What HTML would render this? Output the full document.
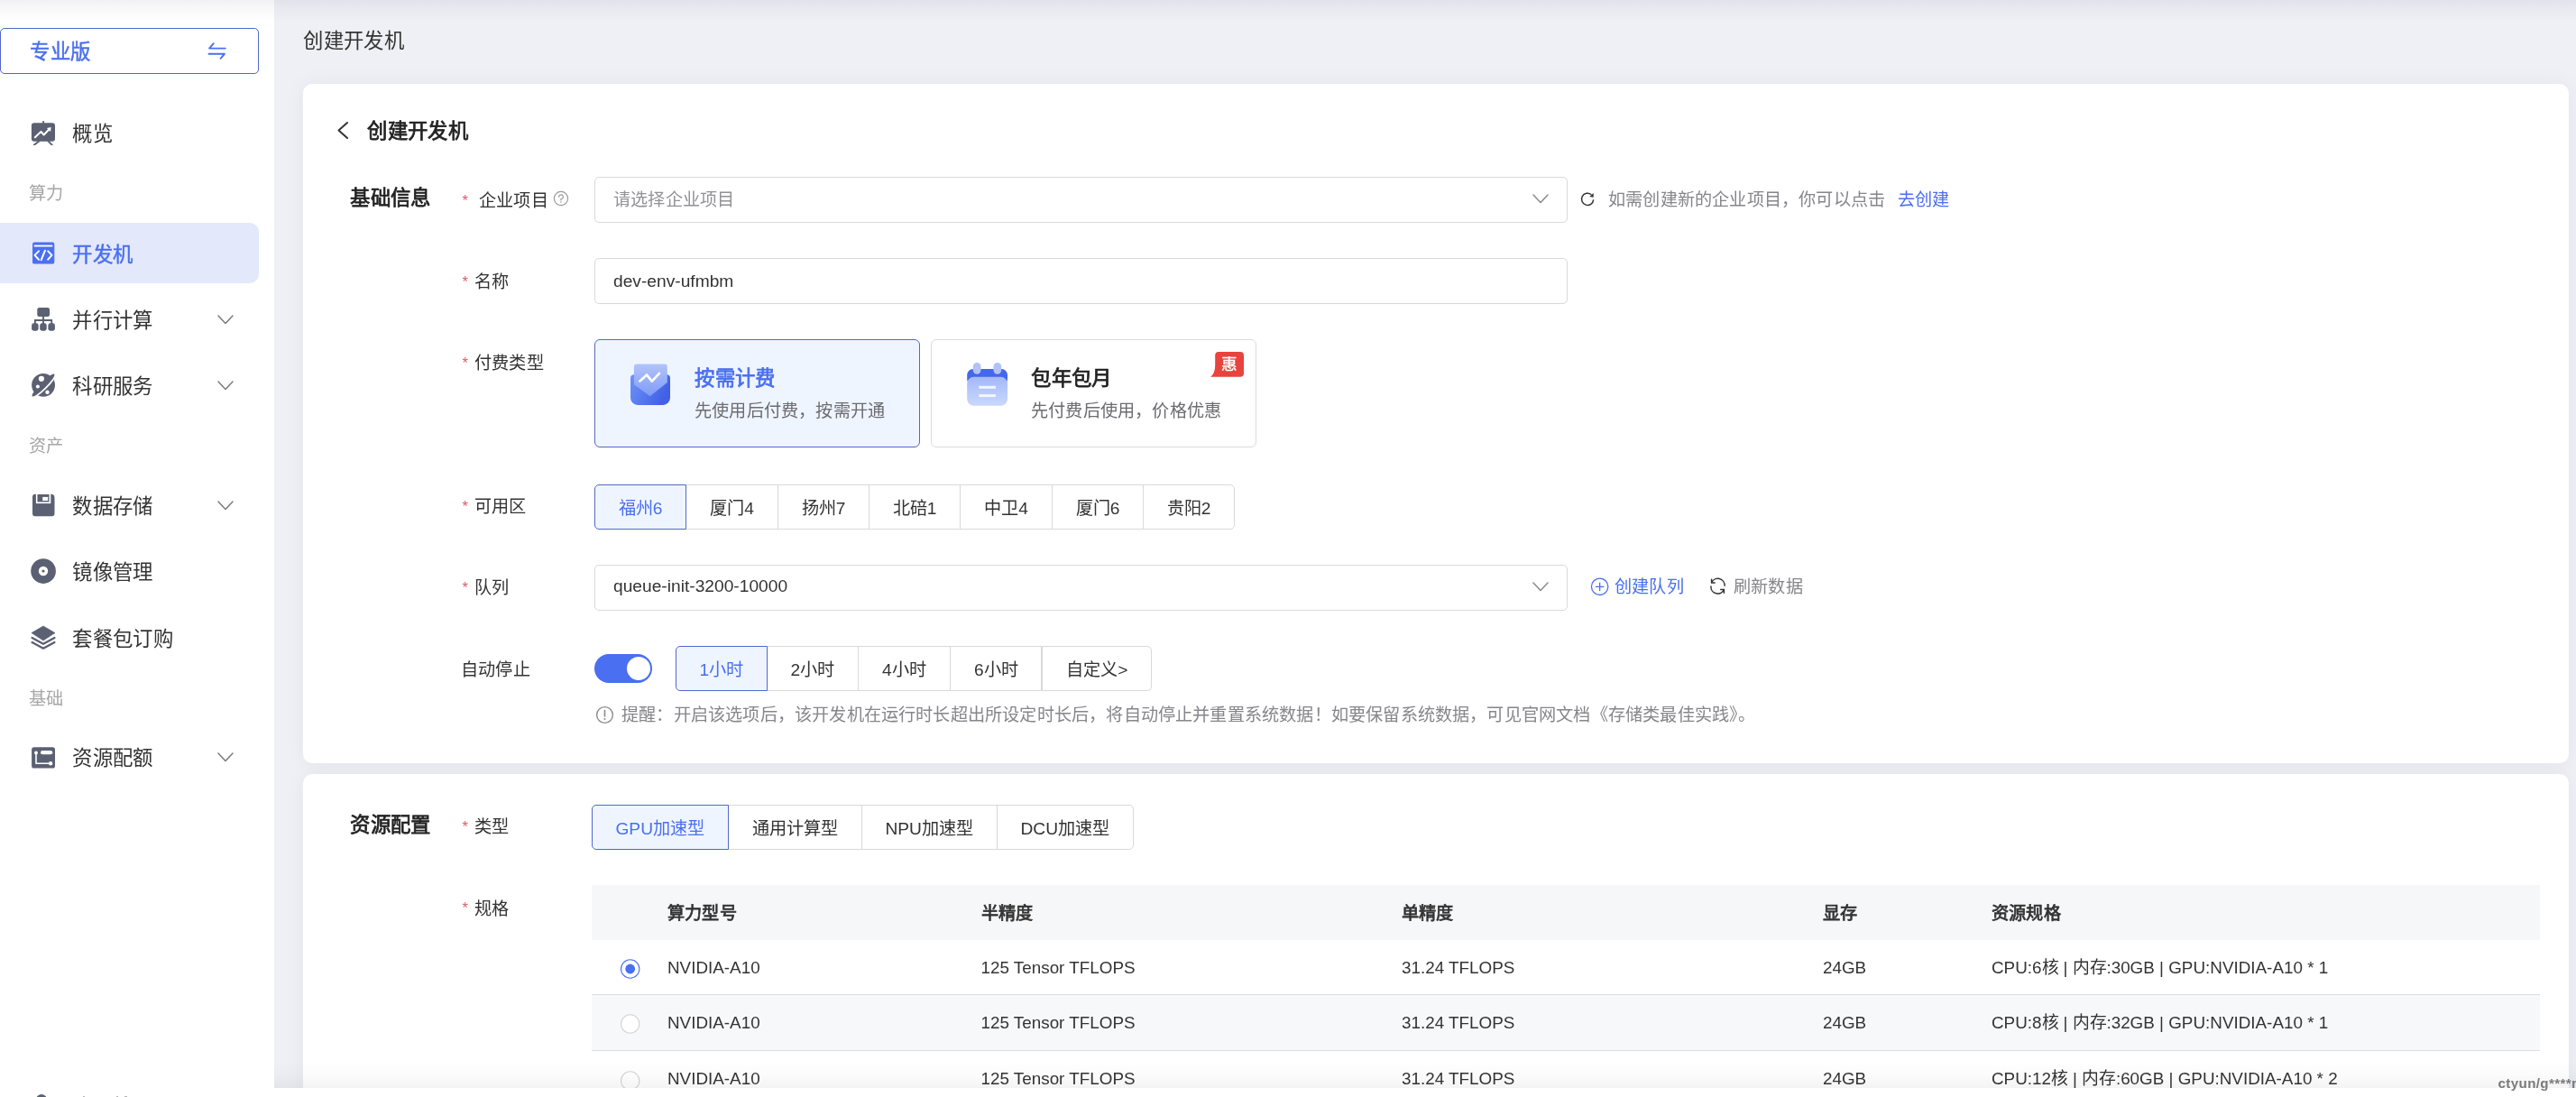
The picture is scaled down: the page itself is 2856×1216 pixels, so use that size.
<!DOCTYPE html>
<html lang="zh-CN">
<head>
<meta charset="utf-8">
<title>创建开发机</title>
<style>
html,body{margin:0;padding:0;}
body{width:2856px;height:1216px;overflow:hidden;position:relative;background:#fff;will-change:transform;
  font-family:"Liberation Sans",sans-serif;font-size:19.2px;color:#333;}
.b{position:absolute;box-sizing:border-box;display:block;}
.t{position:absolute;white-space:nowrap;box-sizing:border-box;}
.inp{position:absolute;box-sizing:border-box;border:1px solid #d9d9d9;border-radius:5px;background:#fff;}
.seg{position:absolute;box-sizing:border-box;border:1px solid #d9d9d9;background:#fff;}
.seg.on{border-color:#5268c8;background:#eff5ff;z-index:2;}
.star{color:#e5484d;}
i{display:inline-block;width:1em;text-align:center;font-style:normal;white-space:nowrap;overflow:visible;vertical-align:baseline;}
i.h{width:0.5em;text-align:left;}

</style>
</head>
<body>
<div class="b" style="left:304px;top:0px;width:2552px;height:1206px;background:#eff0f5;"></div>
<div class="b" style="left:0px;top:0px;width:304px;height:1216px;background:#fff;"></div>
<div class="b" style="left:336px;top:93px;width:2512px;height:753px;background:#fff;border-radius:10px;box-shadow:0 0 22px rgba(30,30,60,0.05);"></div>
<div class="b" style="left:336px;top:858px;width:2512px;height:400px;background:#fff;border-radius:10px 10px 0 0;box-shadow:0 0 22px rgba(30,30,60,0.05);"></div>
<nav>
<div class="b" style="left:0px;top:31px;width:287px;height:51px;border:1px solid #5268c8;border-radius:5px;background:#fff;"></div>
<div class="t" style="left:33px;top:43.00px;font-size:22.4px;line-height:30px;height:30px;color:#4a6ff0;-webkit-text-stroke:0.45px #4a6ff0;"><i>专</i><i>业</i><i>版</i></div>
<svg class="b" style="left:226px;top:42px;" width="30" height="30" viewBox="0 0 30 30"><g fill="none" stroke="#4a6ff0" stroke-width="1.9" stroke-linecap="round" stroke-linejoin="round"><path d="M10.8 6.2L6.1 11.6H23.8"/><path d="M5.5 17.8H22.9L18.5 22.8"/></g></svg>
<svg class="b" style="left:34px;top:133px" width="28" height="28" viewBox="0 0 28 28"><rect x="0.9" y="3.2" width="26.1" height="20.6" rx="3" fill="#5b6072"/><rect x="13.1" y="1.1" width="2" height="3" rx="0.8" fill="#5b6072"/><path d="M9.3 23.6L4 27.6M19.5 23.6L23.7 27.6" fill="none" stroke="#5b6072" stroke-width="1.9" stroke-linecap="round"/><path d="M4.8 19.3L11.5 12.9L14.6 16.5L20.3 10.5" fill="none" stroke="#fff" stroke-width="2" stroke-linecap="round" stroke-linejoin="round"/><path d="M22.6 8L22.1 13L17.9 9Z" fill="#fff"/></svg>
<div class="t" style="left:80px;top:134.00px;font-size:22.4px;line-height:30px;height:30px;color:#333;"><i>概</i><i>览</i></div>
<div class="t" style="left:32px;top:200.00px;font-size:19.2px;line-height:30px;height:30px;color:#a6a6a6;"><i>算</i><i>力</i></div>
<div class="b" style="left:0px;top:247.0px;width:287px;height:67px;background:#e3e8fb;border-radius:0 10px 10px 0;"></div>
<svg class="b" style="left:34px;top:266.5px" width="28" height="28" viewBox="0 0 28 28"><rect x="2" y="1.5" width="24.3" height="24.1" rx="2.2" fill="#4a6ff0"/><rect x="3.7" y="4.6" width="20.6" height="1.9" fill="#fff"/><path d="M9 11.4L4.5 15.9L9 20.8M19.2 11.4L23.5 15.9L19.2 20.7M15.9 10.8L11.7 21.2" fill="none" stroke="#fff" stroke-width="2" stroke-linecap="round" stroke-linejoin="round"/></svg>
<div class="t" style="left:80px;top:267.50px;font-size:22.4px;line-height:30px;height:30px;color:#4a6ff0;-webkit-text-stroke:0.45px #4a6ff0;"><i>开</i><i>发</i><i>机</i></div>
<svg class="b" style="left:34px;top:340px" width="28" height="28" viewBox="0 0 28 28"><rect x="7.3" y="1.1" width="13.7" height="9.9" rx="2.2" fill="#5b6072"/><path d="M14 10.5V19M4.9 19V15H23.2V19" fill="none" stroke="#5b6072" stroke-width="1.9"/><rect x="1.1" y="18.3" width="7.5" height="8.4" rx="2.4" fill="#5b6072"/><rect x="10.2" y="18.3" width="7.5" height="8.4" rx="2.4" fill="#5b6072"/><rect x="19.4" y="18.3" width="7.5" height="8.4" rx="2.4" fill="#5b6072"/></svg>
<div class="t" style="left:80px;top:341.00px;font-size:22.4px;line-height:30px;height:30px;color:#333;"><i>并</i><i>行</i><i>计</i><i>算</i></div>
<svg class="b" style="left:240.0px;top:347.7px;" width="20" height="12.6" viewBox="0 0 20 12.6"><path d="M2 2L10.0 10.6L18 2" fill="none" stroke="#777" stroke-width="1.4" stroke-linecap="round" stroke-linejoin="round"/></svg>
<svg class="b" style="left:34px;top:413px" width="28" height="28" viewBox="0 0 28 28"><defs><clipPath id="scp"><circle cx="14.05" cy="13.85" r="12.95"/></clipPath></defs><circle cx="14.05" cy="13.85" r="12.95" fill="#5b6072"/><g clip-path="url(#scp)"><ellipse cx="15.15" cy="15.15" rx="17.8" ry="3.4" transform="rotate(-45 15.15 15.15)" fill="#fff"/></g><ellipse cx="14" cy="14" rx="17.3" ry="3.3" transform="rotate(-45 14 14)" fill="#5b6072"/><circle cx="11.9" cy="6.8" r="3.1" fill="#fff"/><circle cx="7.9" cy="15.5" r="2" fill="#fff"/><circle cx="18.5" cy="21.7" r="2.2" fill="#fff"/></svg>
<div class="t" style="left:80px;top:414.00px;font-size:22.4px;line-height:30px;height:30px;color:#333;"><i>科</i><i>研</i><i>服</i><i>务</i></div>
<svg class="b" style="left:240.0px;top:420.7px;" width="20" height="12.6" viewBox="0 0 20 12.6"><path d="M2 2L10.0 10.6L18 2" fill="none" stroke="#777" stroke-width="1.4" stroke-linecap="round" stroke-linejoin="round"/></svg>
<div class="t" style="left:32px;top:479.50px;font-size:19.2px;line-height:30px;height:30px;color:#a6a6a6;"><i>资</i><i>产</i></div>
<svg class="b" style="left:34px;top:546px" width="28" height="28" viewBox="0 0 28 28"><path d="M5 1.8H22.5Q26.5 1.8 26.5 6V23.3A3 3 0 0 1 23.5 26.3H5A3 3 0 0 1 2 23.3V4.8A3 3 0 0 1 5 1.8Z" fill="#5b6072"/><path d="M5.9 1H22.3V12.1H5.9Z" fill="#fff"/><rect x="7.5" y="2" width="13" height="8.4" fill="#5b6072"/><rect x="13.2" y="4.9" width="6" height="4.1" fill="#fff"/></svg>
<div class="t" style="left:80px;top:547.00px;font-size:22.4px;line-height:30px;height:30px;color:#333;"><i>数</i><i>据</i><i>存</i><i>储</i></div>
<svg class="b" style="left:240.0px;top:553.7px;" width="20" height="12.6" viewBox="0 0 20 12.6"><path d="M2 2L10.0 10.6L18 2" fill="none" stroke="#777" stroke-width="1.4" stroke-linecap="round" stroke-linejoin="round"/></svg>
<svg class="b" style="left:34px;top:619px" width="28" height="28" viewBox="0 0 28 28"><circle cx="14.05" cy="14.05" r="13.85" fill="#5b6072"/><circle cx="14" cy="14" r="5.2" fill="#fff"/><circle cx="14" cy="14" r="1.6" fill="#5b6072"/></svg>
<div class="t" style="left:80px;top:620.00px;font-size:22.4px;line-height:30px;height:30px;color:#333;"><i>镜</i><i>像</i><i>管</i><i>理</i></div>
<svg class="b" style="left:34px;top:693px" width="28" height="28" viewBox="0 0 28 28"><path d="M14 0.9L27 8.6L14 17L0.9 8.6Z" fill="#5b6072" stroke="#5b6072" stroke-width="0.6" stroke-linejoin="round"/><path d="M1.6 14L14 20.7L26.4 14M1.6 19L14 25.7L26.4 19" fill="none" stroke="#5b6072" stroke-width="2.3" stroke-linejoin="round" stroke-linecap="round"/></svg>
<div class="t" style="left:80px;top:694.00px;font-size:22.4px;line-height:30px;height:30px;color:#333;"><i>套</i><i>餐</i><i>包</i><i>订</i><i>购</i></div>
<div class="t" style="left:32px;top:760.00px;font-size:19.2px;line-height:30px;height:30px;color:#a6a6a6;"><i>基</i><i>础</i></div>
<svg class="b" style="left:34px;top:825px" width="28" height="28" viewBox="0 0 28 28"><rect x="1.1" y="3.3" width="25.9" height="23.2" rx="2.6" fill="#5b6072"/><rect x="11" y="7.1" width="13.3" height="4.2" rx="2.1" fill="#fff"/><path d="M6 9.5V21.2H22" fill="none" stroke="#fff" stroke-width="1.6" stroke-linejoin="round"/><circle cx="6" cy="9.5" r="2" fill="#fff"/><circle cx="22.1" cy="21.2" r="2.2" fill="#fff"/></svg>
<div class="t" style="left:80px;top:826.00px;font-size:22.4px;line-height:30px;height:30px;color:#333;"><i>资</i><i>源</i><i>配</i><i>额</i></div>
<svg class="b" style="left:240.0px;top:832.7px;" width="20" height="12.6" viewBox="0 0 20 12.6"><path d="M2 2L10.0 10.6L18 2" fill="none" stroke="#777" stroke-width="1.4" stroke-linecap="round" stroke-linejoin="round"/></svg>
<div class="b" style="left:40px;top:1213px;width:12px;height:12px;background:#5b6072;border-radius:6px;"></div>
<div class="b" style="left:91.5px;top:1215px;width:2.5px;height:1px;background:#b5b5b8;"></div>
<div class="b" style="left:128.5px;top:1215px;width:2px;height:1px;background:#b5b5b8;"></div>
<div class="b" style="left:138px;top:1215px;width:3px;height:1px;background:#b5b5b8;"></div>
</nav>
<main>
<section>
<div class="t" style="left:336px;top:31.00px;font-size:22.4px;line-height:30px;height:30px;color:#333;"><i>创</i><i>建</i><i>开</i><i>发</i><i>机</i></div>
<svg class="b" style="left:370px;top:132px;" width="20" height="26" viewBox="0 0 20 26"><path d="M15 4L5.5 12.5L15 21" fill="none" stroke="#333" stroke-width="2" stroke-linecap="round" stroke-linejoin="round"/></svg>
<div class="t" style="left:407px;top:131.00px;font-size:22.4px;line-height:30px;height:30px;color:#222;-webkit-text-stroke:0.75px;"><i>创</i><i>建</i><i>开</i><i>发</i><i>机</i></div>
<div class="t" style="left:388px;top:205.00px;font-size:22.4px;line-height:30px;height:30px;color:#222;-webkit-text-stroke:0.75px;"><i>基</i><i>础</i><i>信</i><i>息</i></div>
<div class="t" style="left:512.4px;top:206.90px;font-size:16.5px;line-height:30px;height:30px;color:#dd5a66;">*</div>
<div class="t" style="left:531px;top:208.00px;font-size:19.2px;line-height:30px;height:30px;color:#333;"><i>企</i><i>业</i><i>项</i><i>目</i></div>
<svg class="b" style="left:613.3px;top:211px;" width="18" height="18" viewBox="0 0 18 18"><circle cx="9" cy="9" r="7.6" fill="none" stroke="#999" stroke-width="1.2"/><path d="M6.6 7.3A2.4 2.4 0 1 1 9 9.6V10.9" fill="none" stroke="#999" stroke-width="1.2" stroke-linecap="round"/><circle cx="9" cy="13" r="0.8" fill="#999"/></svg>
<div class="inp" style="left:659px;top:196px;width:1079px;height:51px;"></div>
<div class="t" style="left:680px;top:207.00px;font-size:19.2px;line-height:30px;height:30px;color:#929297;"><i>请</i><i>选</i><i>择</i><i>企</i><i>业</i><i>项</i><i>目</i></div>
<svg class="b" style="left:1697.5px;top:214.25px;" width="20" height="12.5" viewBox="0 0 20 12.5"><path d="M2 2L10.0 10.5L18 2" fill="none" stroke="#8a8a8a" stroke-width="1.5" stroke-linecap="round" stroke-linejoin="round"/></svg>
<svg class="b" style="left:1750px;top:210px;" width="22" height="22" viewBox="0 0 22 22"><path d="M16.67 11.37A6.6 6.6 0 1 1 14.34 5.74" fill="none" stroke="#333" stroke-width="1.5"/><path d="M16.7 4V8.7L12.3 7.9Z" fill="#333"/></svg>
<div class="t" style="left:1783px;top:207.00px;font-size:19.2px;line-height:30px;height:30px;color:#86868b;"><i>如</i><i>需</i><i>创</i><i>建</i><i>新</i><i>的</i><i>企</i><i>业</i><i>项</i><i>目</i><i>，</i><i>你</i><i>可</i><i>以</i><i>点</i><i>击</i></div>
<div class="t" style="left:2104px;top:207.00px;font-size:19.2px;line-height:30px;height:30px;color:#4a6ff0;"><i>去</i><i>创</i><i>建</i></div>
<div class="t" style="left:512.4px;top:296.90px;font-size:16.5px;line-height:30px;height:30px;color:#dd5a66;">*</div>
<div class="t" style="left:526px;top:298.00px;font-size:19.2px;line-height:30px;height:30px;color:#333;"><i>名</i><i>称</i></div>
<div class="inp" style="left:659px;top:286px;width:1079px;height:51px;"></div>
<div class="t" style="left:680px;top:296.50px;font-size:19.2px;line-height:30px;height:30px;color:#333;">dev-env-ufmbm</div>
<div class="t" style="left:512.4px;top:386.90px;font-size:16.5px;line-height:30px;height:30px;color:#dd5a66;">*</div>
<div class="t" style="left:526px;top:388.00px;font-size:19.2px;line-height:30px;height:30px;color:#333;"><i>付</i><i>费</i><i>类</i><i>型</i></div>
<div class="b" style="left:659px;top:376px;width:361px;height:120px;border:1px solid #5268c8;border-radius:6px;background:#eff5ff;"></div>
<div class="b" style="left:1032px;top:376px;width:361px;height:120px;border:1px solid #dcdcdc;border-radius:6px;background:#fff;"></div>
<div class="t" style="left:770px;top:405.00px;font-size:22.4px;line-height:30px;height:30px;color:#4a6ff0;-webkit-text-stroke:0.75px;"><i>按</i><i>需</i><i>计</i><i>费</i></div>
<div class="t" style="left:770px;top:441.00px;font-size:19.2px;line-height:30px;height:30px;color:#6c6c71;"><i>先</i><i>使</i><i>用</i><i>后</i><i>付</i><i>费</i><i>，</i><i>按</i><i>需</i><i>开</i><i>通</i></div>
<div class="t" style="left:1143px;top:405.00px;font-size:22.4px;line-height:30px;height:30px;color:#222;-webkit-text-stroke:0.75px;"><i>包</i><i>年</i><i>包</i><i>月</i></div>
<div class="t" style="left:1143px;top:441.00px;font-size:19.2px;line-height:30px;height:30px;color:#6c6c71;"><i>先</i><i>付</i><i>费</i><i>后</i><i>使</i><i>用</i><i>，</i><i>价</i><i>格</i><i>优</i><i>惠</i></div>
<svg class="b" style="left:695px;top:400px;z-index:4;" width="52" height="52" viewBox="0 0 52 52"><defs><linearGradient id="pb" x1="0" y1="0" x2="1" y2="0.35"><stop offset="0" stop-color="#6d93fa"/><stop offset="1" stop-color="#4160e6"/></linearGradient><linearGradient id="pp" x1="0" y1="0" x2="0" y2="1"><stop offset="0" stop-color="#b3c4fa"/><stop offset="1" stop-color="#7d9af7"/></linearGradient></defs><path d="M8 15.2H44A4 4 0 0 1 48 19.2V40.9A8 8 0 0 1 40 48.9H12A8 8 0 0 1 4 40.9V19.2A4 4 0 0 1 8 15.2Z" fill="url(#pb)"/><path d="M11 3.5H41.8A3 3 0 0 1 44.8 6.5V24L25.6 39.3L7.9 26.2V6.5A3 3 0 0 1 11 3.5Z" fill="url(#pp)"/><path d="M14.4 22.4L22.1 15.5L27.8 22.6L36 13.9" fill="none" stroke="#fff" stroke-width="2.7" stroke-linecap="round" stroke-linejoin="round"/></svg>
<svg class="b" style="left:1068px;top:398px;z-index:4;" width="54" height="54" viewBox="0 0 54 54"><defs><linearGradient id="cb" x1="0" y1="0" x2="0" y2="1"><stop offset="0" stop-color="#a5b8f8"/><stop offset="1" stop-color="#c9d8fd"/></linearGradient></defs><rect x="4.2" y="11" width="44.8" height="18" rx="6.5" fill="#4568ea"/><rect x="4.2" y="19.7" width="44.8" height="32" rx="7.5" fill="url(#cb)"/><rect x="10.8" y="4.1" width="8.7" height="12.6" rx="4.35" fill="#b1c2f8"/><rect x="33.5" y="4.1" width="8.7" height="12.6" rx="4.35" fill="#b1c2f8"/><rect x="17.3" y="29.8" width="18.6" height="3" fill="#f3f6ff"/><rect x="17.3" y="39.1" width="18.6" height="3" fill="#f3f6ff"/></svg>
<svg class="b" style="left:1338px;top:386px;z-index:4;" width="46" height="36" viewBox="0 0 46 36"><path d="M13 4.1H37Q41 4.1 41 8.1V28Q41 31.7 37 31.7H4Q9.2 28 9.2 19V8.1Q9.2 4.1 13 4.1Z" fill="#e8433d"/></svg>
<div class="t" style="left:1354.3px;top:392.40px;font-size:17.6px;line-height:24px;height:24px;color:#fff;z-index:5;-webkit-text-stroke:0.35px #fff;"><i>惠</i></div>
<div class="t" style="left:512.4px;top:545.90px;font-size:16.5px;line-height:30px;height:30px;color:#dd5a66;">*</div>
<div class="t" style="left:526px;top:547.00px;font-size:19.2px;line-height:30px;height:30px;color:#333;"><i>可</i><i>用</i><i>区</i></div>
<div class="seg on" style="left:659px;top:537px;width:102px;height:50px;border-radius:5px 0 0 5px;"></div>
<div class="t" style="left:659px;top:549.00px;font-size:19.2px;line-height:30px;height:30px;color:#4a6ff0;width:102px;text-align:center;z-index:3;"><i>福</i><i>州</i>6</div>
<div class="seg" style="left:760px;top:537px;width:103px;height:50px;"></div>
<div class="t" style="left:760px;top:549.00px;font-size:19.2px;line-height:30px;height:30px;color:#333;width:103px;text-align:center;z-index:3;"><i>厦</i><i>门</i>4</div>
<div class="seg" style="left:862px;top:537px;width:102px;height:50px;"></div>
<div class="t" style="left:862px;top:549.00px;font-size:19.2px;line-height:30px;height:30px;color:#333;width:102px;text-align:center;z-index:3;"><i>扬</i><i>州</i>7</div>
<div class="seg" style="left:963px;top:537px;width:102px;height:50px;"></div>
<div class="t" style="left:963px;top:549.00px;font-size:19.2px;line-height:30px;height:30px;color:#333;width:102px;text-align:center;z-index:3;"><i>北</i><i>碚</i>1</div>
<div class="seg" style="left:1064px;top:537px;width:103px;height:50px;"></div>
<div class="t" style="left:1064px;top:549.00px;font-size:19.2px;line-height:30px;height:30px;color:#333;width:103px;text-align:center;z-index:3;"><i>中</i><i>卫</i>4</div>
<div class="seg" style="left:1166px;top:537px;width:102px;height:50px;"></div>
<div class="t" style="left:1166px;top:549.00px;font-size:19.2px;line-height:30px;height:30px;color:#333;width:102px;text-align:center;z-index:3;"><i>厦</i><i>门</i>6</div>
<div class="seg" style="left:1267px;top:537px;width:102px;height:50px;border-radius:0 5px 5px 0;"></div>
<div class="t" style="left:1267px;top:549.00px;font-size:19.2px;line-height:30px;height:30px;color:#333;width:102px;text-align:center;z-index:3;"><i>贵</i><i>阳</i>2</div>
<div class="t" style="left:512.4px;top:635.90px;font-size:16.5px;line-height:30px;height:30px;color:#dd5a66;">*</div>
<div class="t" style="left:526px;top:637.00px;font-size:19.2px;line-height:30px;height:30px;color:#333;"><i>队</i><i>列</i></div>
<div class="inp" style="left:659px;top:626px;width:1079px;height:51px;"></div>
<div class="t" style="left:680px;top:635.20px;font-size:19.2px;line-height:30px;height:30px;color:#333;">queue-init-3200-10000</div>
<svg class="b" style="left:1697.5px;top:643.75px;" width="20" height="12.5" viewBox="0 0 20 12.5"><path d="M2 2L10.0 10.5L18 2" fill="none" stroke="#8a8a8a" stroke-width="1.5" stroke-linecap="round" stroke-linejoin="round"/></svg>
<svg class="b" style="left:1762px;top:639px;" width="24" height="24" viewBox="0 0 24 24"><circle cx="11.65" cy="11.3" r="9.2" fill="none" stroke="#4a6ff0" stroke-width="1.3"/><path d="M11.65 7.2V15.6M7.3 11.3H16" stroke="#4a6ff0" stroke-width="1.3" stroke-linecap="round"/></svg>
<div class="t" style="left:1790px;top:636.10px;font-size:19.2px;line-height:30px;height:30px;color:#4a6ff0;"><i>创</i><i>建</i><i>队</i><i>列</i></div>
<svg class="b" style="left:1894px;top:639px;" width="22" height="22" viewBox="0 0 22 22"><g fill="none" stroke="#333" stroke-width="1.5" stroke-linecap="round" stroke-linejoin="round"><path d="M3.6 6.8A7.6 7.6 0 0 1 18.1 10.3"/><path d="M3.6 3.3V6.9H7.2"/><path d="M17.4 14.6A7.6 7.6 0 0 1 2.9 11.1"/><path d="M13.7 14.5H17.4V18.2"/></g></svg>
<div class="t" style="left:1922px;top:636.10px;font-size:19.2px;line-height:30px;height:30px;color:#86868b;"><i>刷</i><i>新</i><i>数</i><i>据</i></div>
<div class="t" style="left:511px;top:728.00px;font-size:19.2px;line-height:30px;height:30px;color:#333;"><i>自</i><i>动</i><i>停</i><i>止</i></div>
<div class="b" style="left:659px;top:725px;width:64px;height:32px;background:#4a6ff0;border-radius:16px;"></div>
<div class="b" style="left:695px;top:728px;width:26px;height:26px;background:#fff;border-radius:13px;"></div>
<div class="seg on" style="left:749px;top:716px;width:102px;height:50px;border-radius:5px 0 0 5px;"></div>
<div class="t" style="left:749px;top:728.00px;font-size:19.2px;line-height:30px;height:30px;color:#4a6ff0;width:102px;text-align:center;z-index:3;">1<i>小</i><i>时</i></div>
<div class="seg" style="left:850px;top:716px;width:102px;height:50px;"></div>
<div class="t" style="left:850px;top:728.00px;font-size:19.2px;line-height:30px;height:30px;color:#333;width:102px;text-align:center;z-index:3;">2<i>小</i><i>时</i></div>
<div class="seg" style="left:951px;top:716px;width:103px;height:50px;"></div>
<div class="t" style="left:951px;top:728.00px;font-size:19.2px;line-height:30px;height:30px;color:#333;width:103px;text-align:center;z-index:3;">4<i>小</i><i>时</i></div>
<div class="seg" style="left:1053px;top:716px;width:103px;height:50px;"></div>
<div class="t" style="left:1053px;top:728.00px;font-size:19.2px;line-height:30px;height:30px;color:#333;width:103px;text-align:center;z-index:3;">6<i>小</i><i>时</i></div>
<div class="seg" style="left:1155px;top:716px;width:122px;height:50px;border-radius:0 5px 5px 0;"></div>
<div class="t" style="left:1155px;top:728.00px;font-size:19.2px;line-height:30px;height:30px;color:#333;width:122px;text-align:center;z-index:3;"><i>自</i><i>定</i><i>义</i>&gt;</div>
<div class="b" style="left:1154px;top:717px;width:1px;height:48px;background:#d9d9d9;z-index:1;"></div>
<svg class="b" style="left:660px;top:782px;" width="22" height="22" viewBox="0 0 22 22"><circle cx="10.5" cy="10.5" r="8.9" fill="none" stroke="#8a8a8a" stroke-width="1.4"/><path d="M10.5 5.6V12" stroke="#8a8a8a" stroke-width="1.6" stroke-linecap="round"/><circle cx="10.5" cy="14.9" r="1" fill="#8a8a8a"/></svg>
<div class="t" style="left:689px;top:778.40px;font-size:19.2px;line-height:30px;height:30px;color:#86868b;"><i>提</i><i>醒</i><i>：</i><i>开</i><i>启</i><i>该</i><i>选</i><i>项</i><i>后</i><i>，</i><i>该</i><i>开</i><i>发</i><i>机</i><i>在</i><i>运</i><i>行</i><i>时</i><i>长</i><i>超</i><i>出</i><i>所</i><i>设</i><i>定</i><i>时</i><i>长</i><i>后</i><i>，</i><i>将</i><i>自</i><i>动</i><i>停</i><i>止</i><i>并</i><i>重</i><i>置</i><i>系</i><i>统</i><i>数</i><i>据</i><i>！</i><i>如</i><i>要</i><i>保</i><i>留</i><i>系</i><i>统</i><i>数</i><i>据</i><i>，</i><i>可</i><i>见</i><i>官</i><i>网</i><i>文</i><i>档</i><i>《</i><i>存</i><i>储</i><i>类</i><i>最</i><i>佳</i><i>实</i><i>践</i><i class="h">》</i><i>。</i></div>
</section>
<section>
<div class="t" style="left:388px;top:899.60px;font-size:22.4px;line-height:30px;height:30px;color:#222;-webkit-text-stroke:0.75px;"><i>资</i><i>源</i><i>配</i><i>置</i></div>
<div class="t" style="left:512.4px;top:900.90px;font-size:16.5px;line-height:30px;height:30px;color:#dd5a66;">*</div>
<div class="t" style="left:526px;top:902.00px;font-size:19.2px;line-height:30px;height:30px;color:#333;"><i>类</i><i>型</i></div>
<div class="seg on" style="left:656px;top:892px;width:152px;height:50px;border-radius:5px 0 0 5px;"></div>
<div class="t" style="left:656px;top:904.00px;font-size:19.2px;line-height:30px;height:30px;color:#4a6ff0;width:152px;text-align:center;z-index:3;">GPU<i>加</i><i>速</i><i>型</i></div>
<div class="seg" style="left:807px;top:892px;width:149px;height:50px;"></div>
<div class="t" style="left:807px;top:904.00px;font-size:19.2px;line-height:30px;height:30px;color:#333;width:149px;text-align:center;z-index:3;"><i>通</i><i>用</i><i>计</i><i>算</i><i>型</i></div>
<div class="seg" style="left:955px;top:892px;width:151px;height:50px;"></div>
<div class="t" style="left:955px;top:904.00px;font-size:19.2px;line-height:30px;height:30px;color:#333;width:151px;text-align:center;z-index:3;">NPU<i>加</i><i>速</i><i>型</i></div>
<div class="seg" style="left:1105px;top:892px;width:152px;height:50px;border-radius:0 5px 5px 0;"></div>
<div class="t" style="left:1105px;top:904.00px;font-size:19.2px;line-height:30px;height:30px;color:#333;width:152px;text-align:center;z-index:3;">DCU<i>加</i><i>速</i><i>型</i></div>
<div class="t" style="left:512.4px;top:991.40px;font-size:16.5px;line-height:30px;height:30px;color:#dd5a66;">*</div>
<div class="t" style="left:526px;top:992.50px;font-size:19.2px;line-height:30px;height:30px;color:#333;"><i>规</i><i>格</i></div>
<div class="b" style="left:656px;top:981px;width:2160px;height:61px;background:#f6f7f9;"></div>
<div class="t" style="left:740px;top:998.00px;font-size:19.2px;line-height:30px;height:30px;color:#333;-webkit-text-stroke:0.75px;"><i>算</i><i>力</i><i>型</i><i>号</i></div>
<div class="t" style="left:1087.5px;top:998.00px;font-size:19.2px;line-height:30px;height:30px;color:#333;-webkit-text-stroke:0.75px;"><i>半</i><i>精</i><i>度</i></div>
<div class="t" style="left:1554px;top:998.00px;font-size:19.2px;line-height:30px;height:30px;color:#333;-webkit-text-stroke:0.75px;"><i>单</i><i>精</i><i>度</i></div>
<div class="t" style="left:2021px;top:998.00px;font-size:19.2px;line-height:30px;height:30px;color:#333;-webkit-text-stroke:0.75px;"><i>显</i><i>存</i></div>
<div class="t" style="left:2208px;top:998.00px;font-size:19.2px;line-height:30px;height:30px;color:#333;-webkit-text-stroke:0.75px;"><i>资</i><i>源</i><i>规</i><i>格</i></div>
<div class="b" style="left:656px;top:1042px;width:2160px;height:61px;background:#fff;border-bottom:1px solid #dcdde1;"></div>
<svg class="b" style="left:686px;top:1060.8px;" width="26" height="26" viewBox="0 0 26 26"><circle cx="12.7" cy="13" r="10.2" fill="#fff" stroke="#4a6ff0" stroke-width="1.1"/><circle cx="12.7" cy="13" r="5.4" fill="#4a6ff0"/></svg>
<div class="t" style="left:740px;top:1057.70px;font-size:18.85px;line-height:30px;height:30px;color:#333;">NVIDIA-A10</div>
<div class="t" style="left:1087.5px;top:1057.70px;font-size:18.85px;line-height:30px;height:30px;color:#333;">125 Tensor TFLOPS</div>
<div class="t" style="left:1554px;top:1057.70px;font-size:18.85px;line-height:30px;height:30px;color:#333;">31.24 TFLOPS</div>
<div class="t" style="left:2021px;top:1057.70px;font-size:18.85px;line-height:30px;height:30px;color:#333;">24GB</div>
<div class="t" style="left:2208px;top:1057.70px;font-size:18.85px;line-height:30px;height:30px;color:#333;">CPU:6<i>核</i> | <i>内</i><i>存</i>:30GB | GPU:NVIDIA-A10 * 1</div>
<div class="b" style="left:656px;top:1103px;width:2160px;height:62px;background:#f7f8fa;border-bottom:1px solid #dcdde1;"></div>
<svg class="b" style="left:686px;top:1122.3px;" width="26" height="26" viewBox="0 0 26 26"><circle cx="12.7" cy="13" r="10.2" fill="#fff" stroke="#d4d4d4" stroke-width="1.1"/></svg>
<div class="t" style="left:740px;top:1119.20px;font-size:18.85px;line-height:30px;height:30px;color:#333;">NVIDIA-A10</div>
<div class="t" style="left:1087.5px;top:1119.20px;font-size:18.85px;line-height:30px;height:30px;color:#333;">125 Tensor TFLOPS</div>
<div class="t" style="left:1554px;top:1119.20px;font-size:18.85px;line-height:30px;height:30px;color:#333;">31.24 TFLOPS</div>
<div class="t" style="left:2021px;top:1119.20px;font-size:18.85px;line-height:30px;height:30px;color:#333;">24GB</div>
<div class="t" style="left:2208px;top:1119.20px;font-size:18.85px;line-height:30px;height:30px;color:#333;">CPU:8<i>核</i> | <i>内</i><i>存</i>:32GB | GPU:NVIDIA-A10 * 1</div>
<div class="b" style="left:656px;top:1165px;width:2160px;height:62px;background:#fff;border-bottom:1px solid #dcdde1;"></div>
<svg class="b" style="left:686px;top:1185.3px;" width="26" height="26" viewBox="0 0 26 26"><circle cx="12.7" cy="13" r="10.2" fill="#fff" stroke="#d4d4d4" stroke-width="1.1"/></svg>
<div class="t" style="left:740px;top:1181.20px;font-size:18.85px;line-height:30px;height:30px;color:#333;">NVIDIA-A10</div>
<div class="t" style="left:1087.5px;top:1181.20px;font-size:18.85px;line-height:30px;height:30px;color:#333;">125 Tensor TFLOPS</div>
<div class="t" style="left:1554px;top:1181.20px;font-size:18.85px;line-height:30px;height:30px;color:#333;">31.24 TFLOPS</div>
<div class="t" style="left:2021px;top:1181.20px;font-size:18.85px;line-height:30px;height:30px;color:#333;">24GB</div>
<div class="t" style="left:2208px;top:1181.20px;font-size:18.85px;line-height:30px;height:30px;color:#333;">CPU:12<i>核</i> | <i>内</i><i>存</i>:60GB | GPU:NVIDIA-A10 * 2</div>
</section>
</main>
<div class="b" style="left:0px;top:0px;width:2856px;height:24px;background:linear-gradient(rgba(40,40,80,0.066),rgba(40,40,80,0.048) 18%,rgba(40,40,80,0.024) 55%,rgba(40,40,80,0));z-index:20;"></div>
<div class="b" style="left:304px;top:1176px;width:2552px;height:30px;background:linear-gradient(rgba(40,40,70,0),rgba(40,40,70,0.015) 50%,rgba(40,40,70,0.052));z-index:20;"></div>
<div class="b" style="left:304px;top:1206px;width:2552px;height:10px;background:#fff;z-index:21;"></div>
<div class="t" style="left:2769.5px;top:1186.30px;font-size:15.2px;line-height:30px;height:30px;color:#7a7a7a;font-weight:700;z-index:30;letter-spacing:0.35px;">ctyun/g****r</div>
</body>
</html>
